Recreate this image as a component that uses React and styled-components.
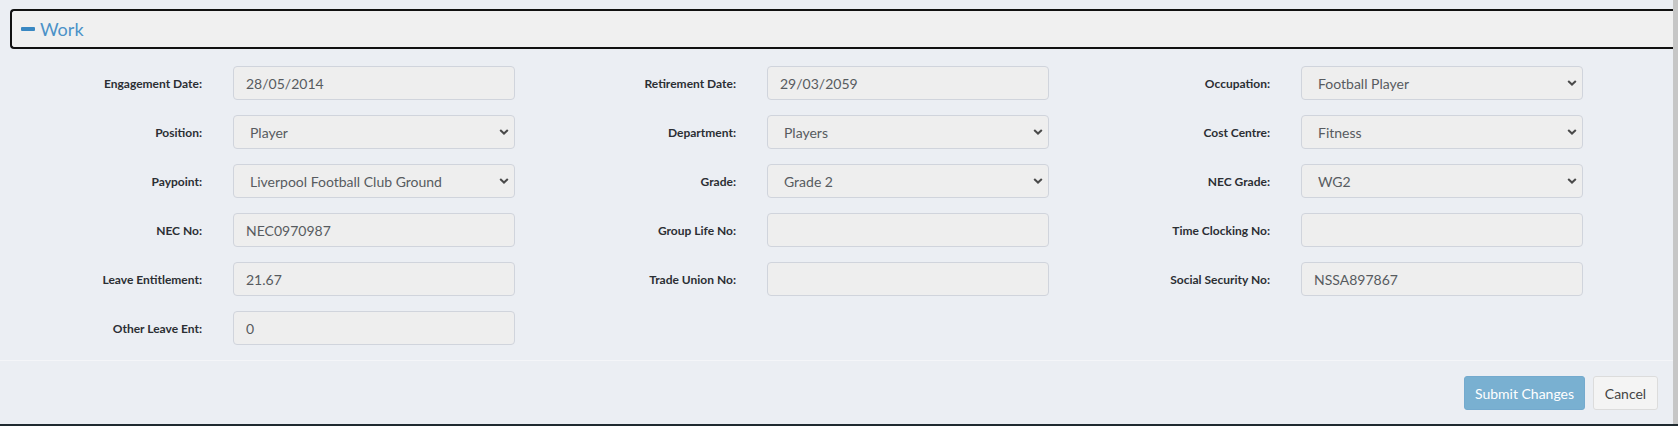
import React from "react";
import styled, { createGlobalStyle } from "styled-components";

const GlobalStyle = createGlobalStyle`
  html, body {
    margin: 0;
    padding: 0;
    background: #ebeef3;
    font-family: Lato, "Liberation Sans", sans-serif;
  }
  * { box-sizing: border-box; }
`;

const fields = [
  { label: "Engagement Date:", value: "28/05/2014" },
  { label: "Retirement Date:", value: "29/03/2059" },
  { label: "Occupation:", value: "Football Player", select: true },
  { label: "Position:", value: "Player", select: true },
  { label: "Department:", value: "Players", select: true },
  { label: "Cost Centre:", value: "Fitness", select: true },
  { label: "Paypoint:", value: "Liverpool Football Club Ground", select: true },
  { label: "Grade:", value: "Grade 2", select: true },
  { label: "NEC Grade:", value: "WG2", select: true },
  { label: "NEC No:", value: "NEC0970987" },
  { label: "Group Life No:", value: "" },
  { label: "Time Clocking No:", value: "" },
  { label: "Leave Entitlement:", value: "21.67" },
  { label: "Trade Union No:", value: "" },
  { label: "Social Security No:", value: "NSSA897867" },
  { label: "Other Leave Ent:", value: "0" },
];

function Chevron() {
  return (
    <svg width="10" height="7" viewBox="0 0 10 7">
      <path d="M1.2 1.4 L5 5 L8.8 1.4" fill="none" stroke="#4a4a4a" strokeWidth="2" />
    </svg>
  );
}

function Field({ label, value, select }) {
  return (
    <FieldRow>
      <Label>{label}</Label>
      {select ? (
        <SelectWrap>
          <Select defaultValue={value}>
            <option value={value}>{value}</option>
          </Select>
          <Arrow>
            <Chevron />
          </Arrow>
        </SelectWrap>
      ) : (
        <Input type="text" defaultValue={value} readOnly />
      )}
    </FieldRow>
  );
}

export default function App() {
  return (
    <>
      <GlobalStyle />
      <Frame>
        <Body>
          <Main>
            <SectionHeader>
              <MinusIcon />
              <HeaderTitle>Work</HeaderTitle>
            </SectionHeader>

            {/* work details */}
            <FormGrid>
              {fields.map((f) => (
                <Field key={f.label} {...f} />
              ))}
            </FormGrid>

            <Footer>
              <SubmitButton disabled>Submit Changes</SubmitButton>
              <CancelButton>Cancel</CancelButton>
            </Footer>
          </Main>
          <ScrollEdge />
        </Body>
        <BottomBar />
      </Frame>
    </>
  );
}

const Frame = styled.div`
  height: 426px;
  display: flex;
  flex-direction: column;
`;
const Body = styled.div`
  flex: 1;
  display: flex;
`;
const Main = styled.div`
  flex: 1;
  padding-top: 9px;
  overflow: hidden;
`;
const ScrollEdge = styled.div`
  width: 5px;
  background: #c6c6c6;
`;
const BottomBar = styled.div`
  height: 2px;
  background: #1f2a30;
`;
const SectionHeader = styled.div`
  margin-left: 10px;
  height: 40px;
  display: flex;
  align-items: center;
  gap: 5px;
  padding-left: 9px;
  background: #f0f0f0;
  border: 2px solid #111;
  border-right: none;
  border-radius: 4px 0 0 4px;
`;
const MinusIcon = styled.span`
  width: 14px;
  height: 4px;
  border-radius: 1px;
  background: #3a88c2;
`;
const HeaderTitle = styled.span`
  font-size: 18px;
  color: #4b92c8;
  line-height: 1;
  padding-bottom: 1px;
`;
const FormGrid = styled.div`
  margin-top: 17px;
  display: grid;
  grid-template-columns: repeat(3, 534px);
  row-gap: 15px;
`;
const FieldRow = styled.div`
  display: grid;
  grid-template-columns: 202px 282px;
  column-gap: 31px;
  align-items: center;
`;
const Label = styled.label`
  text-align: right;
  font-size: 12px;
  font-weight: 700;
  color: #2b2f33;
`;
const controlStyles = `
  width: 100%;
  height: 34px;
  border: 1px solid #d0d4dc;
  border-radius: 4px;
  background: #eeeeee;
  color: #575b60;
  font-family: Lato, "Liberation Sans", sans-serif;
  font-size: 14px;
  outline: none;
`;
const Input = styled.input`
  ${controlStyles}
  padding: 0 12px;
`;
const SelectWrap = styled.div`
  position: relative;
`;
const Select = styled.select`
  ${controlStyles}
  appearance: none;
  padding: 0 30px 0 16px;
`;
const Arrow = styled.span`
  position: absolute;
  right: 6px;
  top: 50%;
  transform: translateY(-50%);
  display: flex;
  pointer-events: none;
`;
const Footer = styled.div`
  margin-top: 15px;
  border-top: 1px solid #f4f5f8;
  padding: 15px 15px 0 0;
  display: flex;
  justify-content: flex-end;
  gap: 8px;
`;
const Button = styled.button`
  height: 34px;
  border-radius: 3px;
  font-family: Lato, "Liberation Sans", sans-serif;
  font-size: 14px;
  padding: 0;
  white-space: nowrap;
`;
const SubmitButton = styled(Button)`
  width: 121px;
  background: #79b0d1;
  border: 1px solid #74aace;
  color: #fff;
`;
const CancelButton = styled(Button)`
  width: 65px;
  background: #f4f4f4;
  border: 1px solid #dcdcdc;
  color: #444;
`;
